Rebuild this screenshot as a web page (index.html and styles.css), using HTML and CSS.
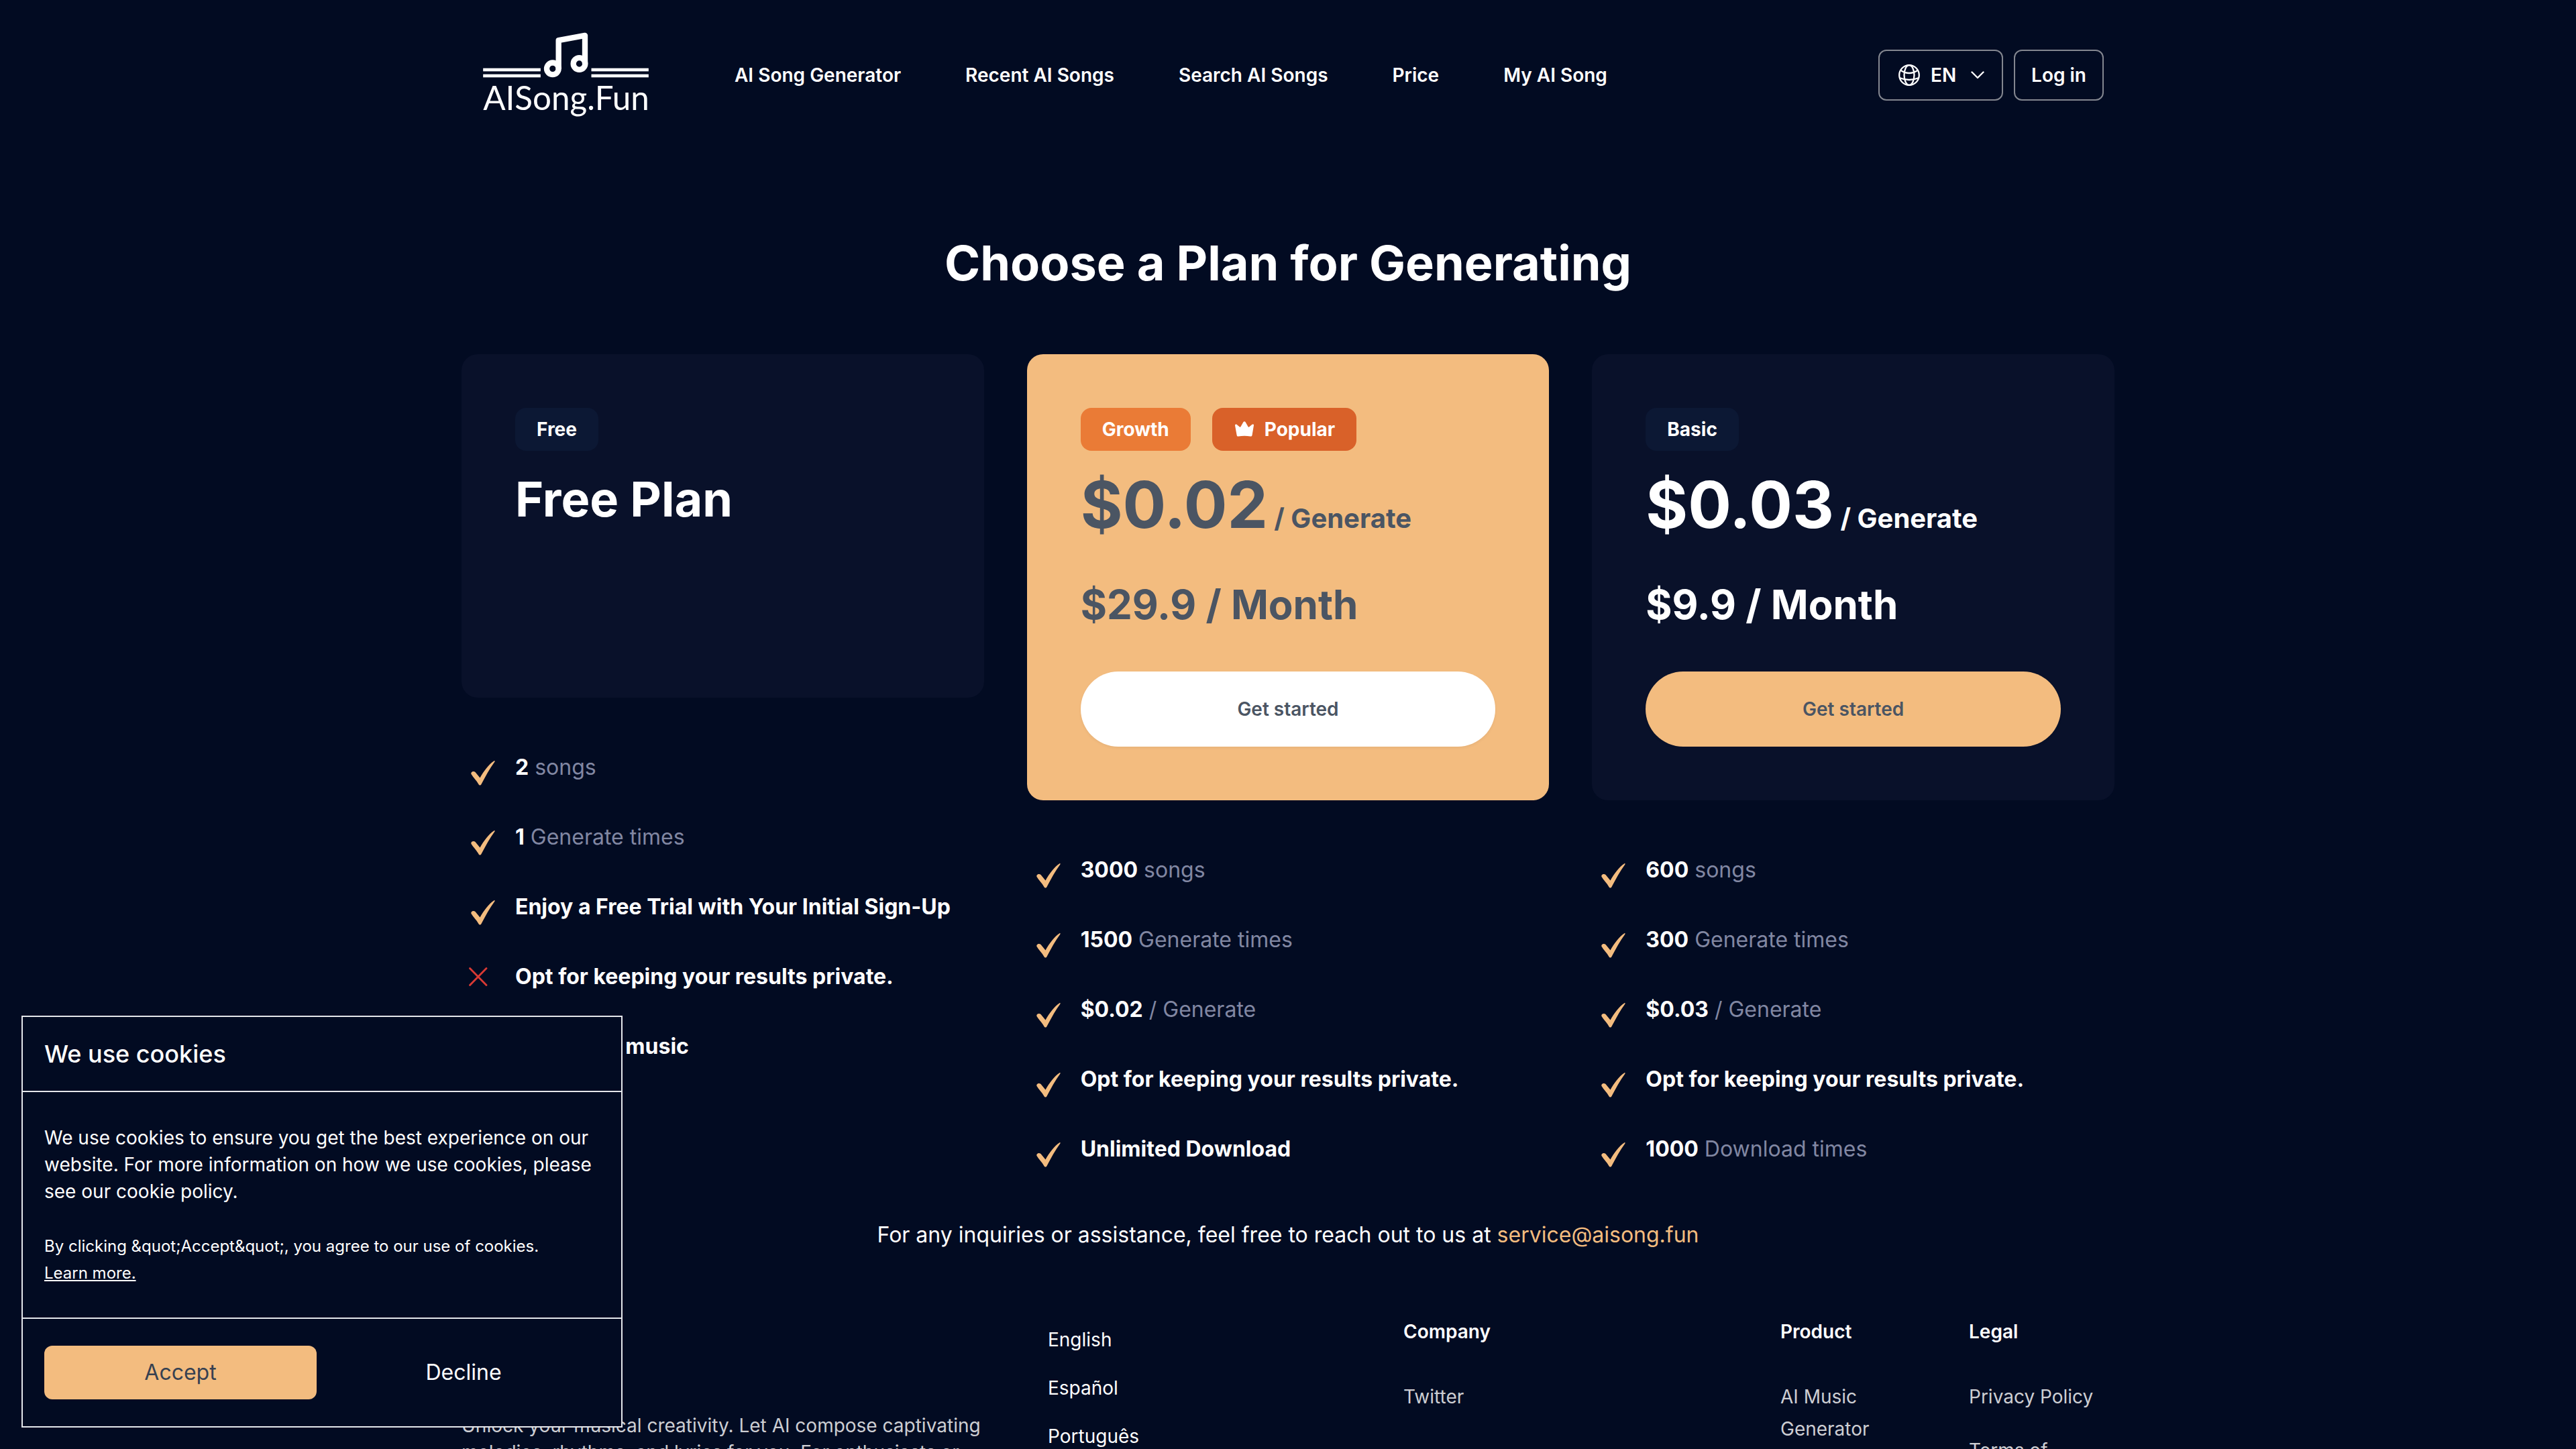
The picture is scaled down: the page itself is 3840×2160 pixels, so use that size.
FILE: index.html
```html
<!DOCTYPE html>
<html lang="en">
<head>
<meta charset="utf-8">
<title>AISong.Fun - Price</title>
<meta name="viewport" content="width=device-width, initial-scale=1">
<link rel="stylesheet" href="styles.css">
</head>
<body>
<svg class="sprite" aria-hidden="true">
  <symbol id="check" viewBox="-3 -4 39 41"><path d="M0.500 20C-0.800 16.500 4 14.500 6.500 17L13.500 25.500C19 15.500 27 5 34.500 0.200C35.600-0.200 36 0.800 35.300 1.800C28 11.500 21.500 24 15.500 35C14.500 37 12.500 37 11.500 35.200C8.500 29.500 3 24.500 0.500 20Z" fill="currentColor"/></symbol>
  <symbol id="cross" viewBox="0 0 39 41"><path d="M1.500 1.500L26 26.500M26 1.500L1.500 26.500" fill="none" stroke="currentColor" stroke-width="2.800" stroke-linecap="round"/></symbol>
</svg>
<div class="page">
  <header class="header">
    <a class="logo" href="#" aria-label="AISong.Fun">
      <svg viewBox="30 50 740 390" class="logo-mark">
        <g fill="#fff"><rect x="30" y="214" width="257" height="14"/><rect x="30" y="241" width="257" height="14"/><rect x="514" y="214" width="256" height="14"/><rect x="514" y="241" width="256" height="14"/></g>
        <g fill="none" stroke="#fff" stroke-width="25" stroke-linejoin="round"><circle cx="341" cy="216" r="26.500"/><circle cx="460" cy="194" r="26.500"/><path d="M367.500 218V89.500L485.500 67.500V196"/></g>
        <text x="30" y="402" class="logo-text">AISong.Fun</text>
      </svg>
    </a>
    <nav class="nav">
      <a href="#">AI Song Generator</a>
      <a href="#">Recent AI Songs</a>
      <a href="#">Search AI Songs</a>
      <a href="#">Price</a>
      <a href="#">My AI Song</a>
    </nav>
    <div class="actions">
      <div class="outline language">
        <svg class="globe" viewBox="0 0 32 32" fill="none" stroke="#fff" stroke-width="2.300"><circle cx="16" cy="16" r="14.800"/><ellipse cx="16" cy="16" rx="7.500" ry="14.800"/><path d="M3.500 9Q16 17 28.500 9M1.500 20Q16 26 30.500 20"/></svg>
        <select class="language-select" aria-label="Language"><option>EN</option></select>
        <svg class="chevron" viewBox="0 0 20 12" fill="none" stroke="#fff" stroke-width="2.400" stroke-linecap="round" stroke-linejoin="round"><path d="M1.500 1.500L10 10L18.500 1.500"/></svg>
      </div>
      <button class="outline login" type="button">Log in</button>
    </div>
  </header>

  <main class="main">
    <h1 class="title">Choose a Plan for Generating</h1>
    <div class="plans">
      <section class="plan">
        <div class="card">
          <div class="badges"><span class="badge">Free</span></div>
          <h2 class="plan-name">Free Plan</h2>
          <div class="action-space"></div>
        </div>
        <ul class="features">
          <li><svg class="mark"><use href="#check"/></svg><span><b>2</b> songs</span></li>
          <li><svg class="mark"><use href="#check"/></svg><span><b>1</b> Generate times</span></li>
          <li><svg class="mark"><use href="#check"/></svg><b>Enjoy a Free Trial with Your Initial Sign-Up</b></li>
          <li><svg class="mark mark-off"><use href="#cross"/></svg><b>Opt for keeping your results private.</b></li>
          <li><svg class="mark mark-off"><use href="#cross"/></svg><b>Download music</b></li>
        </ul>
      </section>
      <section class="plan">
        <div class="card card-popular">
          <div class="badges"><span class="badge badge-growth">Growth</span><span class="badge badge-popular"><svg class="crown" viewBox="0 0 32 32"><path d="M2 10C2 8.500 3.500 8 4.500 8.800L9 12.500Q10 13 10.500 12L14.500 5Q16 3.500 17.500 5L21.500 12Q22 13 23 12.500L27.500 8.800C28.800 8 30.500 8.500 30 10L27.500 25Q27 27 25 26.500Q16 25.200 7 26.500Q5 27 4.700 25Z" fill="#fff"/></svg>Popular</span></div>
          <p class="price">$0.02<span class="unit"> / Generate</span></p>
          <p class="month">$29.9 / Month</p>
          <button class="start start-light" type="button">Get started</button>
        </div>
        <ul class="features">
          <li><svg class="mark"><use href="#check"/></svg><span><b>3000</b> songs</span></li>
          <li><svg class="mark"><use href="#check"/></svg><span><b>1500</b> Generate times</span></li>
          <li><svg class="mark"><use href="#check"/></svg><span><b>$0.02</b> / Generate</span></li>
          <li><svg class="mark"><use href="#check"/></svg><b>Opt for keeping your results private.</b></li>
          <li><svg class="mark"><use href="#check"/></svg><b>Unlimited Download</b></li>
        </ul>
      </section>
      <section class="plan">
        <div class="card">
          <div class="badges"><span class="badge">Basic</span></div>
          <p class="price">$0.03<span class="unit"> / Generate</span></p>
          <p class="month">$9.9 / Month</p>
          <button class="start" type="button">Get started</button>
        </div>
        <ul class="features">
          <li><svg class="mark"><use href="#check"/></svg><span><b>600</b> songs</span></li>
          <li><svg class="mark"><use href="#check"/></svg><span><b>300</b> Generate times</span></li>
          <li><svg class="mark"><use href="#check"/></svg><span><b>$0.03</b> / Generate</span></li>
          <li><svg class="mark"><use href="#check"/></svg><b>Opt for keeping your results private.</b></li>
          <li><svg class="mark"><use href="#check"/></svg><span><b>1000</b> Download times</span></li>
        </ul>
      </section>
    </div>
    <p class="contact">For any inquiries or assistance, feel free to reach out to us at <a href="mailto:service@aisong.fun">service@aisong.fun</a></p>
  </main>

  <footer class="footer">
    <p class="about">Unlock your musical creativity. Let AI compose captivating melodies, rhythms, and lyrics for you. For enthusiasts or</p>
    <div class="languages"><a href="#">English</a><a href="#">Español</a><a href="#">Português</a></div>
    <div class="links">
      <div class="group group-wide"><h3>Company</h3><a href="#">Twitter</a></div>
      <div class="group"><h3>Product</h3><a href="#">AI Music Generator</a></div>
      <div class="group"><h3>Legal</h3><a href="#">Privacy Policy</a><a href="#">Terms of Service</a></div>
    </div>
  </footer>
</div>

<aside class="cookies" aria-label="Cookies">
  <h2 class="cookies-title">We use cookies</h2>
  <div class="cookies-body">
    <p>We use cookies to ensure you get the best experience on our website. For more information on how we use cookies, please see our cookie policy.</p>
    <p class="cookies-note">By clicking &amp;quot;Accept&amp;quot;, you agree to our use of cookies.<br><a href="#">Learn more.</a></p>
  </div>
  <div class="cookies-actions">
    <button class="accept" type="button">Accept</button>
    <button class="decline" type="button">Decline</button>
  </div>
</aside>
</body>
</html>
```
FILE: styles.css
```css
* { box-sizing: border-box; margin: 0; }

body {
  background: #020b22;
  color: #fff;
  font: 400 28px/40px Inter, "Noto Sans", sans-serif;
}

a { color: inherit; text-decoration: none; }
button, select { font: inherit; color: inherit; background: none; border: 0; padding: 0; }
button { cursor: pointer; }
.sprite { display: none; }

.page { height: 100vh; overflow: hidden; }

/* Header */
.header {
  display: flex;
  align-items: center;
  max-width: 2464px;
  height: 224px;
  margin: 0 auto;
  padding: 0 16px;
}
.logo { display: block; margin: 0 128px 0 16px; }
.logo-mark { display: block; width: 247px; height: 130px; overflow: visible; }
.logo-text { font: 400 148px Lato, sans-serif; fill: #fff; }
.nav { display: flex; gap: 96px; font-weight: 600; white-space: nowrap; }
.actions { display: flex; gap: 16px; margin-left: auto; font-weight: 600; }
.outline {
  display: flex;
  align-items: center;
  height: 76px;
  border: 2px solid #83868f;
  border-radius: 12px;
}
.login { padding: 0 24px; }
.language { padding: 0 26px 0 28px; }
.globe { width: 32px; height: 32px; margin-right: 16px; }
.language-select { appearance: none; width: 60px; }
.chevron { width: 20px; height: 12px; }

/* Plans */
.main { max-width: 2464px; margin: 0 auto; padding-top: 128px; }
.title { font-size: 72px; line-height: 80px; font-weight: 700; text-align: center; }
.plans {
  display: grid;
  grid-template-columns: repeat(3, 1fr);
  gap: 64px;
  margin-top: 96px;
}
.card {
  display: flex;
  flex-direction: column;
  padding: 80px;
  border-radius: 24px;
  background: #09112a;
}
.card-popular { background: #f3bc7f; color: #4b5563; }
.badges { display: flex; gap: 32px; margin-bottom: 32px; }
.badge {
  display: flex;
  align-items: center;
  height: 64px;
  padding: 0 32px;
  border-radius: 16px;
  background: #0c1834;
  color: #fff;
  font-weight: 700;
}
.badge-growth { background: #ea7b36; }
.badge-popular { background: #d96129; }
.crown { width: 32px; height: 32px; margin-right: 14px; }
.plan-name { font-size: 72px; line-height: 80px; font-weight: 700; }
.price { font-size: 96px; line-height: 96px; font-weight: 700; white-space: nowrap; }
.unit { font-size: 40px; line-height: 56px; }
.month { margin: 64px 0; font-size: 60px; line-height: 72px; font-weight: 700; }
.start {
  height: 112px;
  border-radius: 56px;
  background: #f3bc7f;
  color: #4b5563;
  font-weight: 600;
  box-shadow: 0 2px 4px rgb(0 0 0 / 5%);
}
.start-light { background: #fff; }
.action-space { height: 112px; margin-top: 64px; }

.features {
  display: grid;
  gap: 56px;
  padding: 80px 0 0;
  list-style: none;
  color: #8187a2;
  font-size: 32px;
  line-height: 48px;
}
.features li { display: grid; grid-template-columns: 69px 1fr; align-items: start; height: 48px; padding-left: 11px; white-space: nowrap; }
.features b { color: #fff; font-weight: 700; }
.mark { width: 39px; height: 41px; margin-top: 10px; color: #f3bc7f; }
.mark-off { color: #d93a34; }

.contact { margin-top: 80px; font-size: 32px; line-height: 48px; text-align: center; }
.contact a { color: #f3bc7f; }

/* Footer */
.footer {
  display: grid;
  grid-template-columns: 810px 466px 1fr;
  max-width: 2464px;
  margin: 0 auto;
  padding: 96px 0;
}
.about { padding: 144px 0 0; color: #cdced3; }
.languages { display: grid; align-content: start; gap: 32px; padding: 16px 64px; }
.links { display: grid; grid-template-columns: repeat(4, 1fr); column-gap: 64px; padding-left: 128px; line-height: 48px; }
.group { display: grid; align-content: start; gap: 32px; color: #cdced3; }
.group-wide { grid-column: span 2; }
.group h3 { margin-bottom: 17px; font-size: 28px; font-weight: 600; color: #fff; }

/* Cookie notice */
.cookies {
  position: fixed;
  left: 32px;
  bottom: 32px;
  width: 896px;
  border: 2px solid #e5e7eb;
  background: #020b22;
}
.cookies-title { padding: 32px; font-size: 36px; line-height: 46px; font-weight: 500; border-bottom: 2px solid #e5e7eb; }
.cookies-body { display: grid; gap: 42px; padding: 48px 32px 46px; }
.cookies-note { font-size: 24px; }
.cookies-note a { text-decoration: underline; }
.cookies-actions {
  display: grid;
  grid-template-columns: 1fr 1fr;
  gap: 16px;
  padding: 40px 32px;
  border-top: 2px solid #e5e7eb;
  font-size: 32px;
}
.cookies-actions button { height: 80px; border-radius: 12px; }
.accept { background: #f3bc7f; color: #374151; }
```
